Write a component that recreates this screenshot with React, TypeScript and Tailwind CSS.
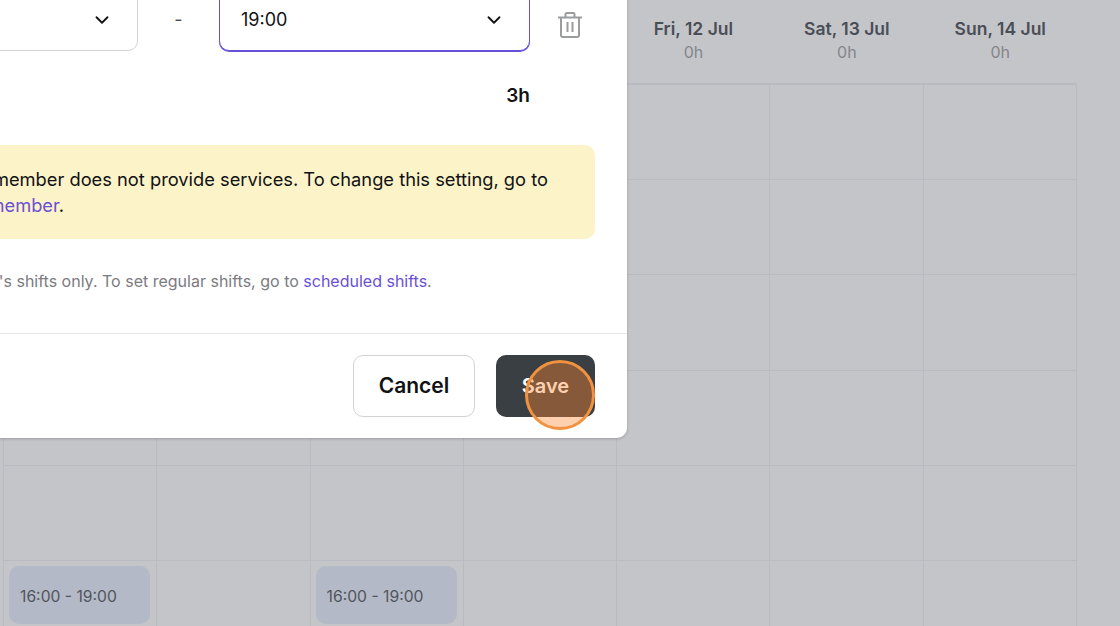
import { ChevronDown } from 'lucide-react';

// the first four day headers sit behind the dialog
const days = [
  { label: '', hours: '' },
  { label: '', hours: '' },
  { label: '', hours: '' },
  { label: '', hours: '' },
  { label: 'Fri, 12 Jul', hours: '0h' },
  { label: 'Sat, 13 Jul', hours: '0h' },
  { label: 'Sun, 14 Jul', hours: '0h' },
];

const rows = [0, 1, 2, 3, 4, 5];

function TrashIcon() {
  return (
    <svg width="24" height="26" viewBox="0 0 24 26" fill="none" stroke="#9b9c9e" strokeWidth="2" strokeLinejoin="round">
      <path d="M0 5.500h24" />
      <path d="M7.500 5V2.200c0-.6.5-1.200 1.200-1.200h6.600c.7 0 1.200.6 1.200 1.200V5" />
      <path d="M3 5.500V23c0 1 .8 2 2 2h14c1.200 0 2-1 2-2V5.500" />
      <path d="M9.500 10v10M14.500 10v10" />
    </svg>
  );
}

function SelectBox({ value, active }: { value?: string; active?: boolean }) {
  return (
    <div
      className={`h-[63px] flex items-center justify-between rounded-[10px] bg-white pl-[21px] pr-[24px] ${
        active ? 'w-[311px] border border-[#6950d8] shadow-[0_1px_0_0_#6950d8]' : 'flex-1 border border-[#d3d3d5]'
      }`}
    >
      <span className="text-[18px] text-[#101214]">{value}</span>
      <ChevronDown size={22} strokeWidth={2} className="text-[#101214]" />
    </div>
  );
}

export default function App() {
  return (
    <div className="relative w-[1120px] h-[626px] overflow-hidden bg-[#c4c5c9] font-['Inter',sans-serif]">
      {/* Calendar behind the dialog */}
      <div className="ml-[3px] w-[1074px]">
        <div className="grid grid-cols-7 h-[85px] border-b-2 border-[#b9bbc0]">
          {days.map((d, i) => (
            <div key={i} className="flex flex-col items-center pt-[16px]">
              <span className="text-[17.5px] leading-[26px] font-semibold text-[#4a4e56]">{d.label}</span>
              <span className="text-[16px] leading-[20px] text-[#84868b]">{d.hours}</span>
            </div>
          ))}
        </div>
        <div className="border-l border-[#b9bbc0]">
          {rows.map((r) => (
            <div key={r} className="grid grid-cols-7 h-[95.2px]">
              {days.map((d, i) => (
                <div key={i} className="border-r border-b border-[#b9bbc0] pt-[5px] pl-[5px] pr-[6px]">
                  {r === 5 && (i === 0 || i === 2) && (
                    <div className="h-[58px] flex items-center rounded-[10px] bg-[#b3b9c7] pl-[11px] pt-[3px] text-[15.7px] text-[#52555c]">
                      16:00 - 19:00
                    </div>
                  )}
                </div>
              ))}
            </div>
          ))}
        </div>
      </div>

      {/* Dialog, partly off the page */}
      <div className="absolute left-[-210px] top-[-12px] w-[837px] bg-white rounded-br-[10px] shadow-[0_1px_3px_rgba(0,0,0,0.2)]">
        <div className="px-[32px]">
          <div className="flex items-center">
            <SelectBox value="16:00" />
            <div className="w-[81px] text-center text-[18px] text-[#4a4e56]">-</div>
            <SelectBox value="19:00" active />
            <div className="w-[65px] flex justify-end pr-[13px] pt-[10px]">
              <TrashIcon />
            </div>
          </div>
          <div className="mt-[31px] pr-[65px] text-right text-[19px] leading-[28px] font-semibold text-[#101214]">3h</div>
          <div className="mt-[35px] h-[94px] rounded-[10px] bg-[#fdf3c8] pl-[81px] pt-[21px] text-[18.3px] leading-[26px] text-[#101214]">
            This team member does not provide services. To change this setting, go to
            <br />
            edit team <span className="text-[#6950d8]">member</span>.
          </div>
          <div className="mt-[30px] mb-[40px] text-[16px] leading-[24px] text-[#7b7b80]">
            You are editing this day's shifts only. To set regular shifts, go to{' '}
            <span className="text-[#6950d8]">scheduled shifts</span>.
          </div>
        </div>
        <div className="flex justify-end gap-[21px] border-t border-[#e5e5e7] px-[32px] py-[21px]">
          <button className="w-[122px] h-[62px] rounded-[10px] border border-[#d3d3d5] bg-white text-[21px] font-semibold text-[#101214]">
            Cancel
          </button>
          <button className="w-[99px] h-[62px] rounded-[10px] bg-[#3a3f44] text-[20px] font-semibold text-white">Save</button>
        </div>
      </div>

      {/* Click marker */}
      <div className="absolute left-[525px] top-[360px] w-[70px] h-[70px] rounded-full border-[3px] border-[#f0923f] bg-[rgba(255,131,42,0.38)]" />
    </div>
  );
}
